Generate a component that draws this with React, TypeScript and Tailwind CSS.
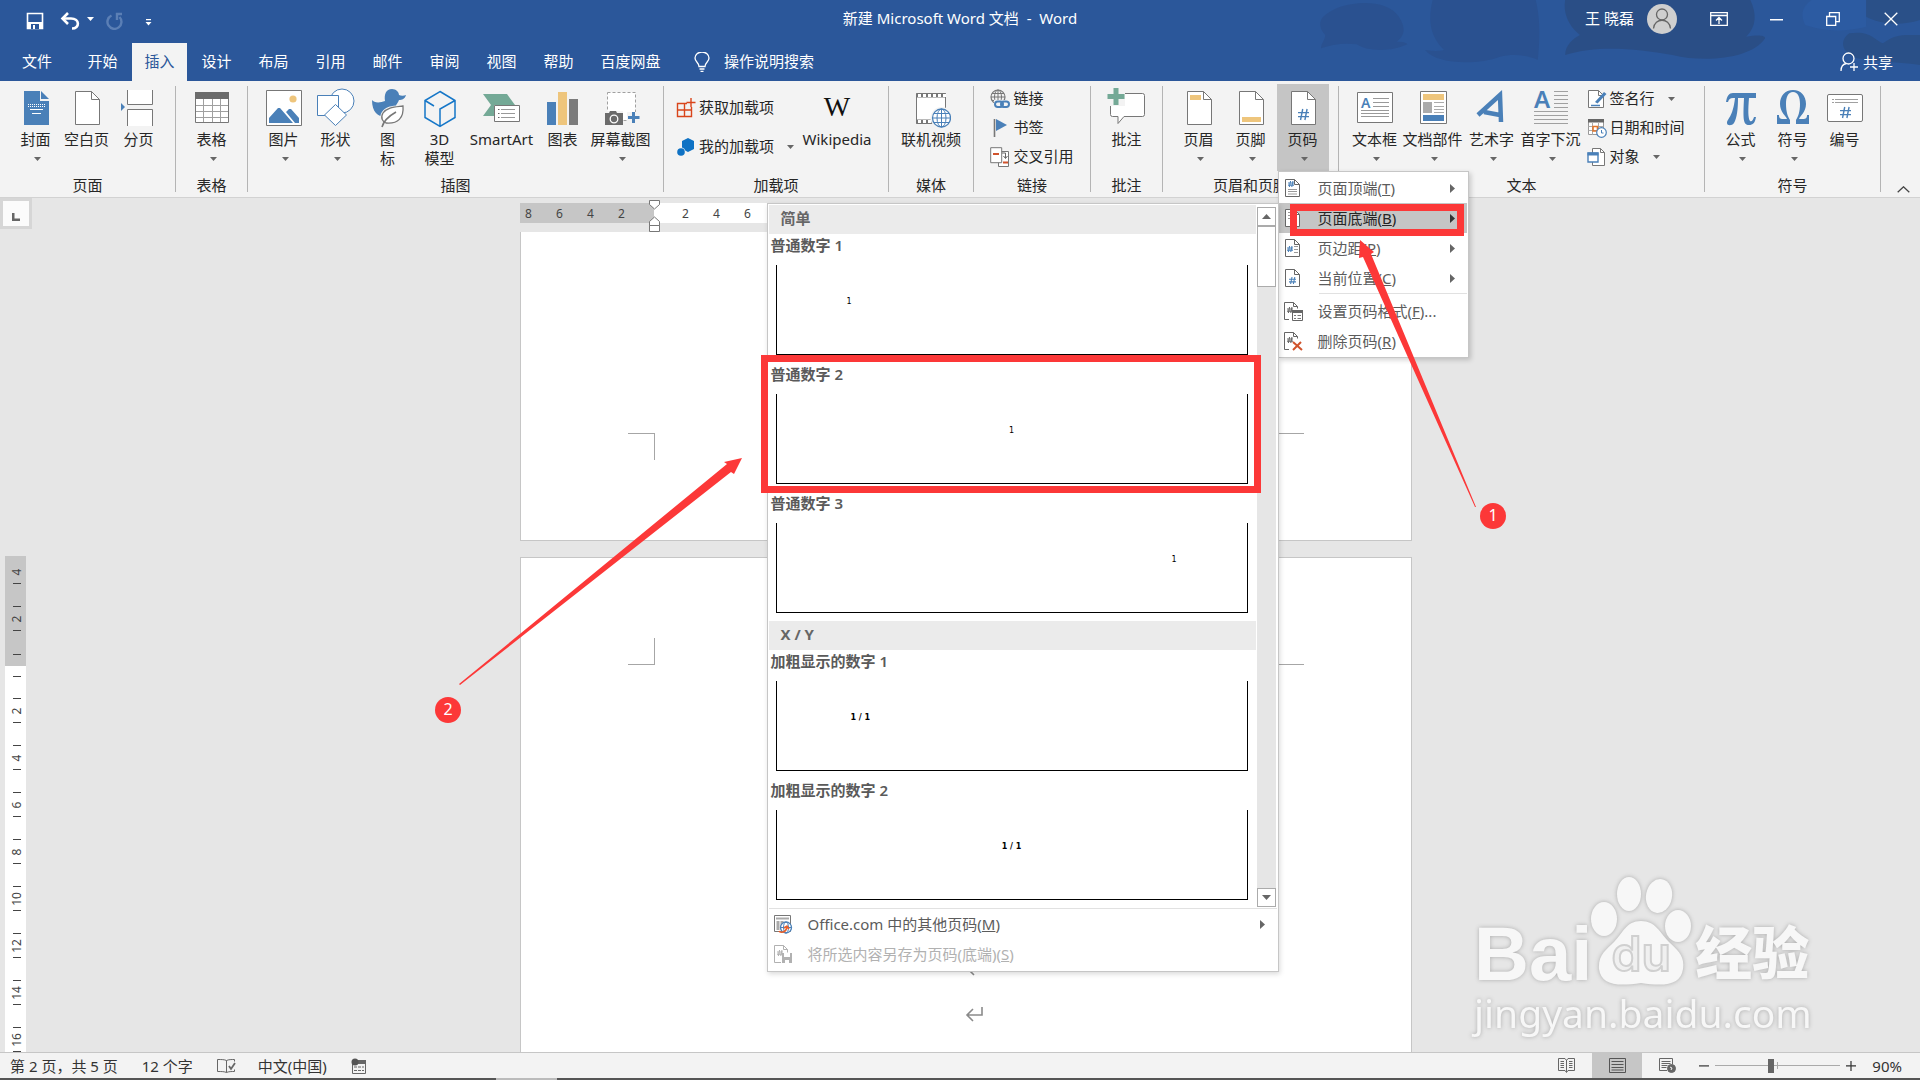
import React from "react";

type Kids = { children?: React.ReactNode };

const GRAY = "#777777";
const BLUE = "#4a80b8";
const SAND = "#eec57c";
const GREEN = "#74a996";

/* ---------- small drawing helpers ---------- */

function Big({ children }: Kids) {
  return (
    <svg className="block h-10 w-10 shrink-0" viewBox="0 0 40 40" fill="none" aria-hidden="true">
      {children}
    </svg>
  );
}

function Small({ children }: Kids) {
  return (
    <svg className="block h-5 w-5 shrink-0" viewBox="0 0 20 20" fill="none" aria-hidden="true">
      {children}
    </svg>
  );
}

function Caret() {
  return (
    <svg className="h-1 w-[7px]" viewBox="0 0 7 4" aria-hidden="true">
      <path d="M0 0h7L3.5 4z" fill="#666" />
    </svg>
  );
}

function Doc({ children }: Kids) {
  return (
    <Big>
      <path d="M8.500 3.500h16l8 8v25h-24z" fill="#fff" stroke={GRAY} />
      <path d="M24.500 3.500v8h8" stroke={GRAY} />
      {children}
    </Big>
  );
}

function MenuDoc({ children, short = false }: Kids & { short?: boolean }) {
  return (
    <Small>
      {short ? (
        <path d="M6 18.500H1.500v-17h9l4 4v2" stroke="#666" />
      ) : (
        <path d="M2.500 1.500h9l5 5v12h-14z" fill="#fff" stroke="#666" />
      )}
      <path d={short ? "M10.500 1.500v4h4" : "M11.500 1.500v5h5"} stroke="#666" />
      {children}
    </Small>
  );
}

function Hash({ x, y, s, color = BLUE }: { x: number; y: number; s: number; color?: string }) {
  const a = s * 0.33;
  return (
    <path
      d={`M${x + a + s * 0.1} ${y}L${x + a - s * 0.1} ${y + s}M${x + 2.2 * a + s * 0.1} ${y}L${x + 2.2 * a - s * 0.1} ${y + s}M${x} ${y + a}H${x + s}M${x} ${y + 2.1 * a}H${x + s}`}
      stroke={color}
      strokeWidth={s > 9 ? 1.4 : 1.1}
    />
  );
}

/* ---------- ribbon icons ---------- */

const icons = {
  cover: (
    <Big>
      <path d="M8 3h16v10h9v24H8z" fill={BLUE} />
      <path d="M25 3l8 8h-8z" fill={BLUE} />
      <path d="M24.500 3v8.500H33" stroke="#f3f3f3" />
      <path d="M12 16.500h17M12 18.500h17" stroke="#fff" strokeDasharray="1 1" />
      <path d="M14 21.500h13M16 25.500h9" stroke="#fff" />
    </Big>
  ),
  blank: <Doc />,
  pageBreak: (
    <Big>
      <path d="M8.500 2v14.500h25V2M8.500 38V21.500h25V38" fill="#fff" stroke={GRAY} />
      <path d="M2 15l4 4-4 4z" fill={BLUE} />
    </Big>
  ),
  table: (
    <Big>
      <path d="M3.500 4.500h33v30h-33z" fill="#fff" stroke={GRAY} />
      <path d="M3 4h34v7H3z" fill="#6b6b6b" />
      <path d="M4 17.500h32M4 23.500h32M4 29.500h32M11.500 11v23M20.500 11v23M28.500 11v23" stroke="#a0a0a0" />
    </Big>
  ),
  picture: (
    <Big>
      <path d="M2.500 2.500h35v35h-35z" fill="#fff" stroke={GRAY} />
      <circle cx="29" cy="11" r="3.600" fill={SAND} />
      <path d="M5 35v-5l9-10h2l13 15zM22 24l3-3h2l8 9v5h-4z" fill={BLUE} />
    </Big>
  ),
  shapes: (
    <Big>
      <circle cx="26" cy="13" r="12" fill="#fff" stroke={BLUE} />
      <path d="M1.500 7.500h21v20h-21z" fill="#fff" stroke={BLUE} />
      <path d="M19.500 16.500l11 10.500-11 10.500L8.500 27z" fill="#fff" stroke={BLUE} />
    </Big>
  ),
  icons: (
    <Big>
      <path d="M4 12c2 3 8 3 13 1-1-7 1-12 7-12 4 0 7 3 7 6 2 1 5 1 7 0-1 4-4 5-7 5-1 3-3 4-3 6l-8 11c-9 1-16-4-16-17z" fill={BLUE} />
      <path d="M35 18c-8 1-16 1-20 7-3 5 0 9 3 10 12 1 18-5 17-17z" fill="#f3f3f3" stroke="#f3f3f3" strokeWidth="3" />
      <path d="M35 18c-8 1-16 1-20 7-3 5 0 9 3 10 12 1 18-5 17-17z" fill="#fff" stroke={GRAY} strokeWidth="1.300" />
      <path d="M28 24c-7 4-12 8-14 15" stroke={GRAY} strokeWidth="1.600" />
    </Big>
  ),
  cube: (
    <Big>
      <path d="M20 3.500l15 9v17l-15 9-15-9v-17zM5 12.500l9 5.500M35 12.500L20 21v17" stroke="#1677c8" strokeWidth="1.500" />
    </Big>
  ),
  smartArt: (
    <Big>
      <path d="M1 6h24l8 11H12v11H1l8-11z" fill={GREEN} />
      <path d="M12.500 17.500h25v16h-25z" fill="#fff" stroke={GRAY} />
      <path d="M19 21.500h14M19 25.500h14M19 29.500h14" stroke="#999" />
      <path d="M16 21.500h1.500M16 25.500h1.500M16 29.500h1.500" stroke="#666" />
    </Big>
  ),
  chart: (
    <Big>
      <path d="M4 14h9v23H4z" fill={BLUE} />
      <path d="M15 4h9v33h-9z" fill={SAND} />
      <path d="M26 11h9v26h-9z" fill="#7b7b7b" />
    </Big>
  ),
  screenshot: (
    <Big>
      <path d="M6.500 4.500h28v28h-28z" fill="#fff" stroke="#a0a0a0" strokeDasharray="3 2" />
      <path d="M3 23h19v15H3z" fill="#f3f3f3" />
      <path d="M4 25h4l1-2h6l1 2h6v12H4z" fill="#6b6b6b" />
      <circle cx="13" cy="31" r="3.800" stroke="#fff" strokeWidth="1.300" />
      <path d="M26 24h14v12H26z" fill="#f3f3f3" />
      <path d="M32.500 24v11M27 29.500h11.500" stroke={BLUE} strokeWidth="3" />
    </Big>
  ),
  wiki: (
    <Big>
      <text x="20" y="28" fontSize="28" textAnchor="middle" fill="#111" fontFamily="Liberation Serif, serif">W</text>
    </Big>
  ),
  video: (
    <Big>
      <path d="M5.500 5.500h29v30h-29z" fill="#fff" stroke={GRAY} />
      <path d="M5 7.500h30M5 33.500h17" stroke={GRAY} strokeWidth="4" />
      <path d="M7 7.500h28M7 33.500h15" stroke="#fff" strokeWidth="3" strokeDasharray="3 2" />
      <circle cx="30.500" cy="30" r="11" fill="#f3f3f3" />
      <circle cx="30.500" cy="30" r="9" fill="#fff" stroke={BLUE} strokeWidth="1.300" />
      <ellipse cx="30.500" cy="30" rx="4.500" ry="9" stroke={BLUE} />
      <path d="M21.500 30h18M30.500 21v18M23 25.500h15M23 34.500h15" stroke={BLUE} />
    </Big>
  ),
  comment: (
    <Big>
      <path d="M5.500 5.500h30a2 2 0 0 1 2 2v19a2 2 0 0 1-2 2H17l-6 7v-7H5.500a2 2 0 0 1-2-2v-19a2 2 0 0 1 2-2z" fill="#fff" stroke={GRAY} />
      <path d="M0 0h18v18H0z" fill="#f3f3f3" />
      <path d="M9 0v17M0.500 8.500h17" stroke={GREEN} strokeWidth="5" />
    </Big>
  ),
  header: (
    <Doc>
      <path d="M11 7h11v5H11z" fill={SAND} />
    </Doc>
  ),
  footer: (
    <Doc>
      <path d="M11 29h19v5H11z" fill={SAND} />
    </Doc>
  ),
  pageNumber: (
    <Doc>
      <Hash x={15} y={21} s={11} />
    </Doc>
  ),
  textBox: (
    <Big>
      <path d="M2.500 4.500h35v30h-35z" fill="#fff" stroke={GRAY} />
      <text x="6" y="20" fontSize="14" fontWeight="600" fill={BLUE} fontFamily="Noto Sans, sans-serif">A</text>
      <path d="M18 10.500h16M18 14.500h16M18 18.500h16M6 22.500h28M6 25.500h28M6 28.500h28" stroke="#999" />
    </Big>
  ),
  quickParts: (
    <Big>
      <path d="M7.500 3.500h26v32h-26z" fill="#fff" stroke={GRAY} />
      <path d="M10 6h21v6H10z" fill={SAND} />
      <path d="M10 14h9v11h-9z" fill="#ababab" />
      <path d="M21 14.500h10M21 18.500h10M21 21.500h10M21 24.500h10" stroke="#ababab" />
      <path d="M10 27h21v6H10z" fill={BLUE} />
    </Big>
  ),
  wordArt: (
    <Big>
      <path d="M6 27L28 7l1 27M12 24l16 3" stroke={BLUE} strokeWidth="4.500" />
    </Big>
  ),
  dropCap: (
    <Big>
      <text x="3" y="20" fontSize="24" fontWeight="600" fill={BLUE} fontFamily="Noto Sans, sans-serif">A</text>
      <path d="M23 3.500h14M23 7.500h14M23 11.500h14M23 15.500h14M23 19.500h14M3 23.500h34M3 27.500h34M3 31.500h34M3 35.500h34" stroke="#a0a0a0" />
    </Big>
  ),
  pi: (
    <Big>
      <path
        d="M5 14c1-6 3-9 7-9h23v5h-7c-1 12-1 20 1 23 2 1 3-1 4-4h2c-1 6-3 8-7 8-6 0-6-6-5-27h-6c0 11-1 20-4 25-2 3-7 3-7 0 0-4 6-6 8-25h-2c-3 0-4 1-5 4z"
        fill={BLUE}
      />
    </Big>
  ),
  omega: (
    <Big>
      <path
        d="M4 27h2c0 3 1 4 4 4h4c-1-3-7-7-7-15C7 8 12 2 20 2s13 6 13 14c0 8-6 12-7 15h4c3 0 4-1 4-4h2v9H23v-4c2-3 4-8 4-16 0-7-2-12-7-12s-7 5-7 12c0 8 2 13 4 16v4H4z"
        fill={BLUE}
      />
    </Big>
  ),
  numbering: (
    <Big>
      <rect x="2.500" y="6.500" width="35" height="27" rx="1.500" fill="#fff" stroke={GRAY} />
      <path d="M7 11.500h2M10 11.500h23M7 14.500h2M10 14.500h23" stroke="#a0a0a0" />
      <Hash x={15} y={19} s={11} />
    </Big>
  ),
};

/* ---------- ribbon pieces ---------- */

function BigButton({
  icon,
  lines,
  caret = false,
  width,
  active = false,
}: {
  icon: React.ReactNode;
  lines: string[];
  caret?: boolean;
  width: string;
  active?: boolean;
}) {
  return (
    <button
      type="button"
      className={`flex h-[87px] shrink-0 flex-col items-center pt-1 leading-[19px] ${width} ${active ? "bg-[#c5c5c5]" : ""}`}
    >
      {icon}
      <span className="mt-0.5 flex flex-col items-center whitespace-nowrap">
        {lines.map((l) => (
          <span key={l}>{l}</span>
        ))}
      </span>
      {caret && (
        <span className="flex h-5 items-center pl-1">
          <Caret />
        </span>
      )}
    </button>
  );
}

function RowButton({ icon, label, caret = false }: { icon: React.ReactNode; label: string; caret?: boolean }) {
  return (
    <button type="button" className="flex h-[29px] items-center gap-[3px] whitespace-nowrap">
      {icon}
      <span className="pb-0.5">{label}</span>
      {caret && (
        <span className="flex pl-[10px]">
          <Caret />
        </span>
      )}
    </button>
  );
}

function Group({ label, width, children }: Kids & { label: string; width: string }) {
  return (
    <section className={`flex shrink-0 ${width}`} aria-label={label}>
      <div className="flex min-w-0 flex-1 flex-col pt-[3px]">
        <div className="flex h-[91px] justify-center">{children}</div>
        <div className="whitespace-nowrap text-center leading-5">{label}</div>
      </div>
      <div className="mb-[5px] mt-[5px] w-px bg-[#b4b4b4]" />
    </section>
  );
}

/* ---------- drop-down menus ---------- */

function MenuItem({
  icon,
  label,
  mnemonic,
  tail = "",
  arrow = false,
  active = false,
  disabled = false,
}: {
  icon: React.ReactNode;
  label: string;
  mnemonic: string;
  tail?: string;
  arrow?: boolean;
  active?: boolean;
  disabled?: boolean;
}) {
  const tone = disabled ? "text-[#b1b1b1]" : active ? "bg-[#c5c5c5] text-[#262626]" : "text-[#5c5c5c]";
  return (
    <button type="button" role="menuitem" disabled={disabled} className={`flex h-[30px] w-full items-center pl-1 pr-3 text-left ${tone}`}>
      {icon}
      <span className="ml-[15px] flex-1 whitespace-nowrap">
        {label}(<u>{mnemonic}</u>){tail}
      </span>
      {arrow && (
        <svg className="h-[9px] w-[5px]" viewBox="0 0 5 9" aria-hidden="true">
          <path d="M0 0l5 4.500L0 9z" fill={active ? "#333" : "#666"} />
        </svg>
      )}
    </button>
  );
}

function Preview({ title, value, align, bold = false }: { title: string; value: string; align: string; bold?: boolean }) {
  return (
    <button type="button" className="flex h-[129px] w-full flex-col pl-0.5 pr-2 text-left">
      <span className="h-[31px] font-semibold leading-[22px] text-[#5a5a5a]">{title}</span>
      <span
        className={`ml-[5px] flex h-[90px] self-stretch border border-t-0 border-black pt-[31px] font-['DejaVu_Sans',sans-serif] text-[8px] leading-3 text-black ${align} ${bold ? "font-bold" : ""}`}
      >
        {value}
      </span>
    </button>
  );
}

function GalleryHeading({ children }: Kids) {
  return <h3 className="h-[29px] bg-[#ebebeb] pl-3 font-bold leading-[27px] text-[#666]">{children}</h3>;
}

function Gallery() {
  return (
    <div className="absolute right-full top-[31px] w-[512px] border border-[#c6c6c6] bg-white p-px shadow-[1px_2px_5px_rgba(0,0,0,0.15)]" role="menu">
      <div className="flex">
        <div className="w-[487px]">
          <GalleryHeading>简单</GalleryHeading>
          <Preview title="普通数字 1" value="1" align="justify-start pl-[70px]" />
          <Preview title="普通数字 2" value="1" align="justify-center" />
          <Preview title="普通数字 3" value="1" align="justify-end pr-[70px]" />
          <GalleryHeading>X / Y</GalleryHeading>
          <Preview title="加粗显示的数字 1" value="1 / 1" align="justify-start pl-[74px]" bold />
          <Preview title="加粗显示的数字 2" value="1 / 1" align="justify-center" bold />
        </div>
        <div className="ml-px mt-0.5 flex h-[700px] w-[19px] flex-col bg-[#e6e6e6]">
          <button type="button" aria-label="向上滚动" className="flex h-[19px] items-center justify-center border border-[#ababab] bg-white">
            <svg className="h-[5px] w-[9px]" viewBox="0 0 9 5"><path d="M0 5h9L4.500 0z" fill="#666" /></svg>
          </button>
          <div className="h-[61px] border border-[#ababab] bg-white" />
          <div className="flex-1" />
          <button type="button" aria-label="向下滚动" className="flex h-[19px] items-center justify-center border border-[#ababab] bg-white">
            <svg className="h-[5px] w-[9px]" viewBox="0 0 9 5"><path d="M0 0h9L4.500 5z" fill="#666" /></svg>
          </button>
        </div>
      </div>
      <div className="border-t border-[#e1e1e1] pb-px">
        <MenuItem
          arrow
          label="Office.com 中的其他页码"
          mnemonic="M"
          icon={
            <Small>
              <path d="M1.500 1.500h16v16h-16z" fill="#fff" stroke="#777" />
              <path d="M3 4.500h13" stroke="#aaa" strokeWidth="2" />
              <path d="M5 7v9M9 7v6" stroke="#aaa" strokeWidth="3" />
              <circle cx="13" cy="13.500" r="5.500" fill="#fff" stroke={BLUE} strokeWidth="1.300" />
              <ellipse cx="13" cy="13.500" rx="2.500" ry="5.500" stroke={BLUE} />
              <path d="M7.500 13.500h11" stroke={BLUE} />
              <path d="M6 17c1 2 7 2 8-4M11 14l3-2 2 3" stroke="#e8602c" strokeWidth="1.600" />
            </Small>
          }
        />
        <MenuItem
          disabled
          label="将所选内容另存为页码(底端)"
          mnemonic="S"
          icon={
            <Small>
              <path d="M8 18.500H1.500v-17h9l4 4v3M10.500 1.500v4h4" stroke="#b1b1b1" />
              <Hash x={4} y={6} s={6} color="#b1b1b1" />
              <path d="M9 9h10v10H9z" fill="#b1b1b1" />
              <path d="M11 9h6v4h-6zM12 16h4v3h-4z" fill="#fff" />
            </Small>
          }
        />
      </div>
    </div>
  );
}

function PageNumberMenu() {
  return (
    <div className="absolute left-px top-[87px] z-20 w-[191px] border border-[#c6c6c6] bg-white py-px pr-px shadow-[2px_2px_5px_rgba(0,0,0,0.18)]" role="menu">
      <MenuItem
        arrow
        label="页面顶端"
        mnemonic="T"
        icon={<MenuDoc><Hash x={5} y={3} s={6} /><path d="M5 11.500h9M5 13.500h9M5 16h9" stroke="#999" /></MenuDoc>}
      />
      <MenuItem
        arrow
        active
        label="页面底端"
        mnemonic="B"
        icon={<MenuDoc><path d="M5 4.500h5M5 7.500h9M5 10.500h9" stroke="#999" /><Hash x={8} y={12} s={6} /></MenuDoc>}
      />
      <MenuItem
        arrow
        label="页边距"
        mnemonic="P"
        icon={<MenuDoc><Hash x={4} y={8} s={6} /><path d="M11 8.500h4M11 11.500h4M11 14.500h4" stroke="#999" /></MenuDoc>}
      />
      <MenuItem arrow label="当前位置" mnemonic="C" icon={<MenuDoc><Hash x={6} y={9} s={7} /></MenuDoc>} />
      <div className="mb-0.5 ml-10 h-px bg-[#e1e1e1]" />
      <MenuItem
        label="设置页码格式"
        mnemonic="F"
        tail="..."
        icon={
          <MenuDoc short>
            <Hash x={4} y={6} s={6} color="#666" />
            <path d="M9.500 9.500h10v10h-10z" fill="#fff" stroke="#666" />
            <path d="M9 10.500h11" stroke="#666" strokeWidth="3" />
            <path d="M11 14.500h2M14.500 14.500h3.500M11 17.500h2M14.500 17.500h3.500" stroke="#777" />
          </MenuDoc>
        }
      />
      <MenuItem
        label="删除页码"
        mnemonic="R"
        icon={
          <MenuDoc short>
            <Hash x={4} y={6} s={6} color="#666" />
            <path d="M10 11l9 8M18 11l-8 8" stroke="#d0532c" strokeWidth="2" />
          </MenuDoc>
        }
      />
      <Gallery />
    </div>
  );
}

/* ---------- title bar and tabs ---------- */

function TitleBar() {
  return (
    <header className="relative h-[43px] shrink-0 text-white">
      <div className="grid h-[37px] grid-cols-[1fr_auto_1fr] items-center">
        <div className="flex items-center pl-[26px]">
          <button type="button" aria-label="保存" className="mt-1">
            <svg className="h-[18px] w-[18px]" viewBox="0 0 18 18" fill="none">
              <path d="M1.500 1.500h15v15h-15z" stroke="#fff" strokeWidth="1.600" />
              <path d="M2 10h14v7H2z" fill="#fff" />
              <path d="M5 12h8v5H5z" fill="#2b579a" />
              <path d="M7 13h2v4H7z" fill="#fff" />
            </svg>
          </button>
          <button type="button" aria-label="撤消" className="ml-4 mt-1">
            <svg className="h-[18px] w-5" viewBox="0 0 20 18" fill="none">
              <path d="M2 6.500h9c9 0 9 10 1 10" stroke="#fff" strokeWidth="2.600" />
              <path d="M8 1L2.500 6.500 8 12" stroke="#fff" strokeWidth="2.600" />
            </svg>
          </button>
          <svg className="ml-[7px] h-1 w-[7px]" viewBox="0 0 7 4"><path d="M0 0h7L3.500 4z" fill="#fff" /></svg>
          <button type="button" aria-label="重复" className="ml-3 mt-1">
            <svg className="h-[18px] w-[18px]" viewBox="0 0 18 18" fill="none">
              <path d="M5.500 3.500a7 7 0 1 0 8 1.500M16 2h-5v6" stroke="#5b7fb5" strokeWidth="2.400" />
            </svg>
          </button>
          <button type="button" aria-label="自定义快速访问工具栏" className="ml-[21px] mt-2">
            <svg className="h-[7px] w-[7px]" viewBox="0 0 7 7"><path d="M1 0h5v1.300H1zM0.500 3h6L3.500 6.500z" fill="#fff" /></svg>
          </button>
        </div>
        <h1 className="whitespace-pre pb-0.5">新建 Microsoft Word 文档  -  Word</h1>
        <div className="flex items-center justify-end pr-[22px]">
          <span className="pb-0.5">王 晓磊</span>
          <svg className="ml-[13px] h-[30px] w-[30px]" viewBox="0 0 30 30" fill="none" aria-hidden="true">
            <circle cx="15" cy="15" r="15" fill="#cfcfcf" />
            <circle cx="15" cy="10.500" r="5.500" stroke="#666" strokeWidth="1.300" />
            <path d="M6.500 24.500c1-11 16-11 17 0" stroke="#666" strokeWidth="1.300" />
          </svg>
          <button type="button" aria-label="功能区显示选项" className="ml-[33px]">
            <svg className="h-[14px] w-[18px]" viewBox="0 0 18 14" fill="none"><path d="M.7.7h16.600v12.600H.7zM1 3.500h16M9 12V6M6 8.500L9 5.500l3 3" stroke="#fff" strokeWidth="1.300" /></svg>
          </button>
          <button type="button" aria-label="最小化" className="ml-[42px]">
            <svg className="h-[14px] w-[14px]" viewBox="0 0 14 14"><path d="M0 7h13v1.500H0z" fill="#fff" /></svg>
          </button>
          <button type="button" aria-label="还原" className="ml-[42px]">
            <svg className="h-[14px] w-[14px]" viewBox="0 0 14 14" fill="none"><path d="M.7 4.500h9v8.800h-9zM3.500 4V.7h9.800v9H10" stroke="#fff" strokeWidth="1.300" /></svg>
          </button>
          <button type="button" aria-label="关闭" className="ml-11">
            <svg className="h-[14px] w-[14px]" viewBox="0 0 14 14" fill="none"><path d="M.7.7l12.600 12.600M13.300.7L.7 13.300" stroke="#fff" strokeWidth="1.300" /></svg>
          </button>
        </div>
      </div>
    </header>
  );
}

function Tabs() {
  const tabs = ["开始", "插入", "设计", "布局", "引用", "邮件", "审阅", "视图", "帮助"];
  return (
    <nav className="relative flex h-[38px] shrink-0 items-stretch text-white">
      <button type="button" className="w-[74px] pb-[3px]">文件</button>
      {tabs.map((t) => (
        <button key={t} type="button" className={t === "插入" ? "mx-px w-[55px] bg-[#f3f3f3] pb-[3px] text-[#2b579a]" : "mx-px w-[55px] pb-[3px]"}>
          {t}
        </button>
      ))}
      <button type="button" className="w-[87px] pb-[3px]">百度网盘</button>
      <button type="button" className="ml-5 flex items-center gap-[14px]">
        <svg className="h-5 w-4" viewBox="0 0 16 20" fill="none">
          <path d="M5 14.500c0-4-4-4.500-4-8.500a7 6 0 0 1 14 0c0 4-4 4.500-4 8.500zM5.500 17h5M6.500 19.300h3" stroke="#fff" strokeWidth="1.300" />
        </svg>
        <span className="pb-0.5">操作说明搜索</span>
      </button>
      <button type="button" className="ml-auto mr-[27px] flex items-center gap-[5px]">
        <svg className="h-5 w-[18px]" viewBox="0 0 18 20" fill="none">
          <circle cx="8.500" cy="6.500" r="5.500" stroke="#fff" strokeWidth="1.300" />
          <path d="M1 19c0-4 2-7 5.500-7.500M14 11v8M10 15h8" stroke="#fff" strokeWidth="1.300" />
        </svg>
        共享
      </button>
    </nav>
  );
}

function HeaderArt() {
  return (
    <svg className="absolute right-0 top-0 h-full w-[660px]" viewBox="0 0 1568 243" preserveAspectRatio="none" aria-hidden="true">
      <path d="M150 50c40-50 150-60 180 0 20 40 10 60-5 75 20 0 25 5 25 8-40 25-100 20-120 0-30-5-60 0-85 12 0-15 10-25 10-40-15-20-15-40-5-55z" fill="#2a5190" />
      <path d="M410 0h245c8 40 12 90 5 180-25-15-60-20-90-10-50 25-150 25-178-20 10 2 30 5 45 0-30-40-40-80-27-150z" fill="#2a5190" />
      <path d="M725 0h440c15 40 15 80-10 110 25-5 45-5 45 5-30 60-140 75-220 50-90-20-180-30-255 0 0-30 20-50 35-60-30-30-40-70-35-105z" fill="#2a4e86" />
      <path d="M1310 0h130v80c-60 20-110 10-145-5-15-40 0-60 15-75z" fill="#2c5ba2" />
      <path d="M1400 100c50-10 60 20 80 30 30-30 50-25 88-25v90c-60-10-110-10-150-20-40-20-40-55-18-75zM1440 0h128v60c-50 20-100 10-128-10z" fill="#2a5088" />
    </svg>
  );
}

/* ---------- ribbon ---------- */

function Ribbon() {
  return (
    <div className="relative z-10 flex h-[117px] shrink-0 border-b border-[#d2d2d2] bg-[#f3f3f3] text-[#262626]">
      <Group label="页面" width="w-44">
        <BigButton icon={icons.cover} lines={["封面"]} caret width="w-12" />
        <BigButton icon={icons.blank} lines={["空白页"]} width="w-[54px]" />
        <BigButton icon={icons.pageBreak} lines={["分页"]} width="w-[50px]" />
      </Group>
      <Group label="表格" width="w-[72px]">
        <BigButton icon={icons.table} lines={["表格"]} caret width="w-[52px]" />
      </Group>
      <Group label="插图" width="w-[416px]">
        <BigButton icon={icons.picture} lines={["图片"]} caret width="w-[50px]" />
        <BigButton icon={icons.shapes} lines={["形状"]} caret width="w-[54px]" />
        <BigButton icon={icons.icons} lines={["图", "标"]} width="w-[50px]" />
        <BigButton icon={icons.cube} lines={["3D", "模型"]} width="w-[54px]" />
        <BigButton icon={icons.smartArt} lines={["SmartArt"]} width="w-[70px]" />
        <BigButton icon={icons.chart} lines={["图表"]} width="w-[52px]" />
        <BigButton icon={icons.screenshot} lines={["屏幕截图"]} caret width="w-[64px]" />
      </Group>
      <Group label="加载项" width="w-[225px]">
        <div className="flex flex-col gap-[10px] pl-1 pt-[9px]">
          <RowButton
            label="获取加载项"
            icon={<Small><path d="M1.500 5.500h14v13h-14zM8.500 5.500v13M1.500 12h14" stroke="#d9451b" strokeWidth="1.400" /><path d="M11 0h8v9h-8z" fill="#f3f3f3" /><path d="M15 0v9M10.500 4.500h9" stroke="#d9451b" strokeWidth="1.400" /></Small>}
          />
          <RowButton
            label="我的加载项"
            caret
            icon={<Small><path d="M12 1l6 3v8l-6 3-6-3V4z" fill="#0f72c4" /><circle cx="5" cy="15" r="4.500" fill="#f3f3f3" /><circle cx="5" cy="15" r="3.800" fill="#0f72c4" /></Small>}
          />
        </div>
        <BigButton icon={icons.wiki} lines={["Wikipedia"]} width="w-[86px]" />
      </Group>
      <Group label="媒体" width="w-[85px]">
        <BigButton icon={icons.video} lines={["联机视频"]} width="w-[70px]" />
      </Group>
      <Group label="链接" width="w-[117px]">
        <div className="flex flex-col items-start">
          <RowButton
            label="链接"
            icon={<Small><circle cx="8" cy="8" r="7" stroke="#777" strokeWidth="1.200" /><ellipse cx="8" cy="8" rx="3.500" ry="7" stroke="#777" /><path d="M1 8h14M8 1v14M2 4.500h12M2 11.500h8" stroke="#777" /><rect x="4" y="11" width="16" height="8" fill="#f3f3f3" /><rect x="5" y="12.500" width="8" height="5.500" rx="2.700" stroke={BLUE} strokeWidth="2" /><rect x="11" y="12.500" width="8" height="5.500" rx="2.700" stroke={BLUE} strokeWidth="2" /></Small>}
          />
          <RowButton label="书签" icon={<Small><path d="M4.500 1v18" stroke="#777" strokeWidth="1.600" /><path d="M6 1l11 6L6 13z" fill={BLUE} /></Small>} />
          <RowButton
            label="交叉引用"
            icon={<Small><path d="M8.500 4.500h10v15h-10z" fill="#fff" stroke="#777" /><path d="M.7.700h11v15h-11z" fill="#fff" stroke="#777" /><path d="M3 7h6M13 15.500h5" stroke="#d0532c" strokeWidth="2" /><path d="M12 6h3.500v5M13.500 9l2 2.500 2-2.500" stroke="#666" /></Small>}
          />
        </div>
      </Group>
      <Group label="批注" width="w-[72px]">
        <BigButton icon={icons.comment} lines={["批注"]} width="w-[52px]" />
      </Group>
      <Group label="页眉和页脚" width="w-44">
        <BigButton icon={icons.header} lines={["页眉"]} caret width="w-[52px]" />
        <BigButton icon={icons.footer} lines={["页脚"]} caret width="w-[52px]" />
        <div className="relative">
          <BigButton icon={icons.pageNumber} lines={["页码"]} caret active width="w-[52px]" />
          <PageNumberMenu />
        </div>
      </Group>
      <Group label="文本" width="w-[366px]">
        <BigButton icon={icons.textBox} lines={["文本框"]} caret width="w-[56px]" />
        <BigButton icon={icons.quickParts} lines={["文档部件"]} caret width="w-[60px]" />
        <BigButton icon={icons.wordArt} lines={["艺术字"]} caret width="w-[58px]" />
        <BigButton icon={icons.dropCap} lines={["首字下沉"]} caret width="w-[60px]" />
        <div className="ml-[6px] flex w-[110px] flex-col items-start">
          <RowButton
            label="签名行"
            caret
            icon={<Small><path d="M1.500 1.500h10l5 5v12h-15z" fill="#fff" stroke="#777" /><path d="M11.500 1.500v5h5" stroke="#777" /><path d="M4 16.500h9" stroke={BLUE} strokeWidth="1.500" /><path d="M8 13l9-10 2.500 2-9 9.500z" fill={BLUE} /></Small>}
          />
          <RowButton
            label="日期和时间"
            icon={<Small><path d="M1.500 1.500h15v15h-15z" fill="#fff" stroke="#999" /><path d="M1 1h16v3.500H1z" fill="#666" /><path d="M1.500 8.500h15M1.500 12.500h15M5.500 5v12M11.500 5v12" stroke="#aaa" /><path d="M6 8.500h4.500v4.500H6z" stroke="#e0752c" strokeWidth="1.600" /><circle cx="14.500" cy="14.500" r="4.800" fill="#fff" stroke={BLUE} strokeWidth="1.200" /><path d="M14.500 12v3h2" stroke={BLUE} /></Small>}
          />
          <RowButton
            label="对象"
            caret
            icon={<Small><path d="M5.500 1.500h8l4 4v13h-12z" fill="#fff" stroke="#777" /><path d="M13.500 1.500v4h4" stroke="#777" /><path d="M1 6h10v9H1z" fill="#fff" stroke={BLUE} strokeWidth="1.400" /><path d="M.500 7h11" stroke={BLUE} strokeWidth="3" /></Small>}
          />
        </div>
      </Group>
      <Group label="符号" width="w-44">
        <BigButton icon={icons.pi} lines={["公式"]} caret width="w-[52px]" />
        <BigButton icon={icons.omega} lines={["符号"]} caret width="w-[52px]" />
        <BigButton icon={icons.numbering} lines={["编号"]} width="w-[52px]" />
      </Group>
      <button type="button" aria-label="折叠功能区" className="mb-1 ml-auto mr-[10px] self-end">
        <svg className="h-[7px] w-[13px]" viewBox="0 0 13 7" fill="none"><path d="M.700 6.300L6.500.800l5.800 5.500" stroke="#444" strokeWidth="1.300" /></svg>
      </button>
    </div>
  );
}

/* ---------- document area ---------- */

function RulerMark({ n, first = false }: { n: number; first?: boolean }) {
  return (
    <div className="flex h-[47px] shrink-0 flex-col items-center justify-between py-[11px] pl-[3px]">
      <div className={first ? "h-px w-2" : "h-px w-2 bg-[#444]"} />
      <span className="-rotate-90 text-[12px] leading-3">{n}</span>
      <div className="h-px w-2 bg-[#444]" />
    </div>
  );
}

function VerticalRuler() {
  return (
    <div className="flex w-8 shrink-0 flex-col">
      <button type="button" aria-label="制表符" className="flex h-[31px] w-8 shrink-0 border-[3px] border-[#d6d6d6] bg-[#fbfbfb]">
        <svg className="ml-[9px] mt-3 h-2 w-2" viewBox="0 0 8 8"><path d="M0 0h2.500v5.500H8V8H0z" fill="#666" /></svg>
      </button>
      <div className="ml-[5px] mt-[327px] flex min-h-0 w-[21px] flex-1 flex-col text-[#444]">
        <div className="flex h-[110px] shrink-0 flex-col justify-end overflow-hidden bg-[#c6c6c6]">
          <RulerMark n={4} first />
          <RulerMark n={2} />
          <div className="flex h-6 shrink-0 items-center justify-center pl-[3px]">
            <div className="h-px w-2 bg-[#444]" />
          </div>
        </div>
        <div className="min-h-0 flex-1 overflow-hidden bg-white">
          <div className="flex h-[21px] items-center justify-center pl-[3px]">
            <div className="h-px w-2 bg-[#444]" />
          </div>
          {[2, 4, 6, 8, 10, 12, 14, 16].map((n) => (
            <RulerMark key={n} n={n} />
          ))}
        </div>
      </div>
    </div>
  );
}

function HorizontalRuler() {
  return (
    <div className="relative mt-[5px] flex h-5 shrink-0 text-[12px] leading-[22px] text-[#444]">
      <div className="flex w-[134px] bg-[#c6c6c6]">
        {[8, 6, 4, 2].map((n) => (
          <span key={n} className="w-[31px] pl-[5px] text-left">{n}</span>
        ))}
      </div>
      <div className="flex flex-1 bg-white pl-4">
        {[2, 4, 6].map((n) => (
          <span key={n} className="w-[31px] text-center">{n}</span>
        ))}
      </div>
      <svg className="absolute -top-[3px] left-[129px] h-8 w-[11px]" viewBox="0 0 11 32" fill="#fff" stroke="#777">
        <path d="M.500.500h10v4l-5 4.500-5-4.500zM.500 25.500v-4l5-4.500 5 4.500v4zM.500 25.500h10v6H.500z" />
      </svg>
    </div>
  );
}

function Crop({ className }: { className: string }) {
  return <div className={`h-[27px] w-[27px] border-[#a6a6a6] ${className}`} />;
}

function Pages() {
  return (
    <div className="flex min-w-0 flex-1 justify-center pr-5">
      <div className="flex w-[892px] flex-col">
        <HorizontalRuler />
        <div className="mt-[9px] flex h-[309px] shrink-0 justify-between border border-t-0 border-[#c6c6c6] bg-white px-[107px] pt-[201px]">
          <Crop className="border-r border-t" />
          <Crop className="border-l border-t" />
        </div>
        <div className="mt-4 flex min-h-0 flex-1 flex-col border border-b-0 border-[#c6c6c6] bg-white px-[107px] pt-20">
          <div className="flex justify-between">
            <Crop className="border-b border-r" />
            <Crop className="border-b border-l" />
          </div>
          <svg className="ml-[337px] mt-[306px] h-[52px] w-[19px] shrink-0" viewBox="0 0 19 52" fill="none" aria-hidden="true">
            <path d="M3-2l6 6M17 36v8H2M8 38l-6 6 6 6" stroke="#8a8a8a" strokeWidth="1.600" />
          </svg>
        </div>
      </div>
    </div>
  );
}

function Watermark() {
  return (
    <div className="absolute bottom-3 right-[101px] w-[345px] font-bold leading-none text-[#f7f7f7] [filter:drop-shadow(0_0_2px_#aaa)]">
      <div className="flex items-end">
        <span className="font-['Liberation_Sans',sans-serif] text-[76px] leading-[64px]">Bai</span>
        <div className="relative -ml-[3px] h-[110px] w-[104px] shrink-0">
          <svg className="h-full w-full" viewBox="0 0 104 110" fill="#f7f7f7" aria-hidden="true">
            <ellipse cx="15" cy="43" rx="13" ry="17" />
            <ellipse cx="40" cy="18" rx="12" ry="17" />
            <ellipse cx="70" cy="20" rx="13" ry="17" transform="rotate(10 70 20)" />
            <ellipse cx="89" cy="50" rx="13" ry="16" />
            <path d="M52 45c15 0 19 12 28 21 8 8 16 13 14 27-2 15-16 18-42 14-26 4-40 1-42-14-1-14 7-19 15-27 9-9 12-21 27-21z" />
          </svg>
          <span className="absolute inset-x-0 bottom-2 text-center font-['Inter',sans-serif] text-[48px] font-semibold leading-[48px] text-[#f0f0f0] [-webkit-text-stroke:2px_#d0d0d0]">du</span>
        </div>
        <span className="whitespace-nowrap pb-1 pl-0.5 text-[57px] font-black leading-[60px]">经验</span>
      </div>
      <div className="text-[39px] font-normal leading-[54px]">jingyan.baidu.com</div>
    </div>
  );
}

/* ---------- status bar ---------- */

function StatusBar() {
  return (
    <footer className="shrink-0">
      <div className="flex h-[26px] items-center border-t border-[#c6c6c6] bg-[#f3f3f3] pl-[10px] pr-[18px] text-[#333]">
        <span>第 2 页，共 5 页</span>
        <span className="ml-6">12 个字</span>
        <svg className="ml-6 h-4 w-[19px]" viewBox="0 0 19 16" fill="none" stroke="#666">
          <path d="M9.500 14.500c-2-1-5-1-9-1v-12c4 0 7 0 9 1zM9.500 2.500c2-1 5-1 8-1v2M9.500 14.500c2-1 5-1 8-1v-2" />
          <path d="M12 8l2 3 4-6" strokeWidth="1.800" />
        </svg>
        <button type="button" className="ml-[22px]">中文(中国)</button>
        <svg className="ml-6 h-4 w-4" viewBox="0 0 16 16" fill="none">
          <path d="M1.500 5.500h13v10h-13z" stroke="#666" />
          <path d="M7 2h8v4H7z" fill="#666" />
          <circle cx="4" cy="4" r="3.500" fill="#555" />
          <path d="M3 9h10M3 12.500h10" stroke="#666" strokeDasharray="3 1" />
        </svg>
        <button type="button" aria-label="阅读视图" className="ml-auto flex h-full w-[52px] items-center justify-center">
          <svg className="h-[15px] w-[17px]" viewBox="0 0 17 15" fill="none" stroke="#666">
            <path d="M8.500 2.500L7 .500H.500v12H7l1.500 2 1.500-2h6.500V.500H10zM8.500 2v12M2.500 3.500H6M2.500 5.500H6M2.500 7.500H6M2.500 9.500H6M11 3.500h3.500M11 5.500h3.500M11 7.500h3.500M11 9.500h3.500" />
          </svg>
        </button>
        <button type="button" aria-label="页面视图" className="flex h-full w-[50px] items-center justify-center bg-[#c6c6c6]">
          <svg className="h-[15px] w-[17px]" viewBox="0 0 17 15" fill="none" stroke="#555">
            <path d="M.500.500h16v14H.500zM2.500 3.500h12M2.500 6.500h12M2.500 9.500h12M2.500 12h12" />
          </svg>
        </button>
        <button type="button" aria-label="Web 版式视图" className="flex h-full w-[51px] items-center justify-center">
          <svg className="h-[15px] w-[17px]" viewBox="0 0 17 15" fill="none" stroke="#666">
            <path d="M8 12.500H.500v-12h13v6M2.500 3.500h9M2.500 5.500h9M2.500 7.500h6M2.500 9.500h5" />
            <circle cx="12.500" cy="10.500" r="4" fill="#666" />
            <path d="M11 9l2 1-1 2" stroke="#f3f3f3" />
          </svg>
        </button>
        <button type="button" aria-label="缩小" className="ml-[6px]">
          <svg className="h-[10px] w-[10px]" viewBox="0 0 10 10"><path d="M0 4.300h10v1.200H0z" fill="#333" /></svg>
        </button>
        <input
          type="range"
          min="0"
          max="100"
          defaultValue="44"
          aria-label="显示比例"
          className="ml-[6px] h-[14px] w-[125px] appearance-none bg-[linear-gradient(#aaa,#aaa),linear-gradient(#aaa,#aaa)] bg-[length:100%_1px,1px_7px] bg-center bg-no-repeat [&::-webkit-slider-thumb]:h-[14px] [&::-webkit-slider-thumb]:w-[6px] [&::-webkit-slider-thumb]:appearance-none [&::-webkit-slider-thumb]:bg-[#666]"
        />
        <button type="button" aria-label="放大" className="ml-[6px]">
          <svg className="h-[10px] w-[10px]" viewBox="0 0 10 10"><path d="M0 4.300h10v1.200H0zM4.400 0h1.200v10H4.400z" fill="#333" /></svg>
        </button>
        <span className="ml-4">90%</span>
      </div>
      <div className="h-0.5 bg-[#555] pl-[496px]">
        <div className="h-full w-[61px] bg-[#bbb]" />
      </div>
    </footer>
  );
}

/* ---------- numbered call-outs drawn over the window ---------- */

function Annotations() {
  return (
    <svg className="pointer-events-none absolute left-0 top-0 z-30 h-[1080px] w-[1920px]" viewBox="0 0 1920 1080" fill="none" aria-hidden="true">
      <rect x="764.500" y="358.500" width="493" height="131" stroke="#fc3838" strokeWidth="7" />
      <rect x="1293.500" y="207.500" width="167" height="25" stroke="#fc3838" strokeWidth="7" />
      <g fill="#fc3838">
        <path d="M1360 240l14 12-3 2 105 253h-1L1363 257l-4 1z" />
        <path d="M742 458l-8 16-3-2-271 213-1-1 268-220-3-2z" />
        <circle cx="1493" cy="516" r="13" />
        <circle cx="448" cy="710" r="13" />
      </g>
      <g fill="#fff" fontSize="16" textAnchor="middle">
        <text x="1493" y="521">1</text>
        <text x="448" y="715">2</text>
      </g>
    </svg>
  );
}

export default function App() {
  return (
    <div className="relative flex h-screen flex-col overflow-hidden bg-[#e6e6e6] font-['Noto_Sans','Noto_Sans_CJK_SC',sans-serif] text-[15px] leading-5">
      <div className="relative shrink-0 bg-[#2b579a]">
        <HeaderArt />
        <TitleBar />
        <Tabs />
      </div>
      <Ribbon />
      <main className="relative flex min-h-0 flex-1 overflow-hidden">
        <VerticalRuler />
        <Pages />
        <Watermark />
      </main>
      <StatusBar />
      <Annotations />
    </div>
  );
}
